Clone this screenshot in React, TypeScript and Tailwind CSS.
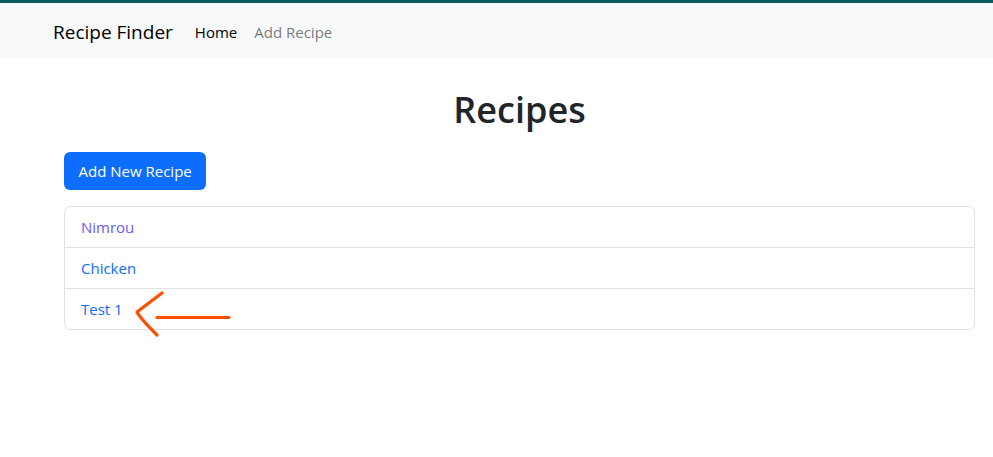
const recipes = [
  { name: 'Nimrou', visited: true },
  { name: 'Chicken', visited: false },
  { name: 'Test 1', visited: false },
];

export default function App() {
  return (
    <div className="min-h-[457px] bg-white text-[#212529] font-['Open_Sans',sans-serif] relative">
      <nav className="border-t-[3px] border-[#0b5c5f] bg-[#f8f9fa] h-[58px] flex items-center pl-[53px] pt-[3px]">
        <span className="text-[19px] text-black mr-[22px]">Recipe Finder</span>
        <div className="flex gap-[17px] text-[15px]">
          <a className="text-black">Home</a>
          <a className="text-black/55">Add Recipe</a>
        </div>
      </nav>

      <main className="pl-[64px] pr-[18px]">
        <h1 className="text-center text-[36px] font-semibold leading-tight mt-[29px] mb-[20px]">Recipes</h1>
        <button className="bg-[#0d6efd] text-white text-[15px] rounded-md h-[38px] px-[14.5px] mb-[16px]">
          Add New Recipe
        </button>
        <ul className="border border-[#dee2e6] rounded-md">
          {recipes.map((r, i) => (
            <li
              key={r.name}
              className={`flex items-center px-[16px] text-[15px] ${i > 0 ? 'h-[41px] border-t border-[#dee2e6]' : 'h-[40px]'}`}
            >
              <a className={r.visited ? 'text-[#6b5cf2]' : 'text-[#0d6efd]'}>{r.name}</a>
            </li>
          ))}
        </ul>
      </main>

      {/* hand-drawn annotation */}
      <svg className="absolute left-[130px] top-[288px]" width="110" height="52" viewBox="0 0 110 52" fill="none">
        <path d="M32 5 L7 24 Q10 30 27 47" stroke="#ff5000" strokeWidth="3.2" strokeLinecap="round" strokeLinejoin="round" />
        <path d="M27 29.5 L99 29.5" stroke="#ff5000" strokeWidth="3.2" strokeLinecap="round" />
      </svg>
    </div>
  );
}
